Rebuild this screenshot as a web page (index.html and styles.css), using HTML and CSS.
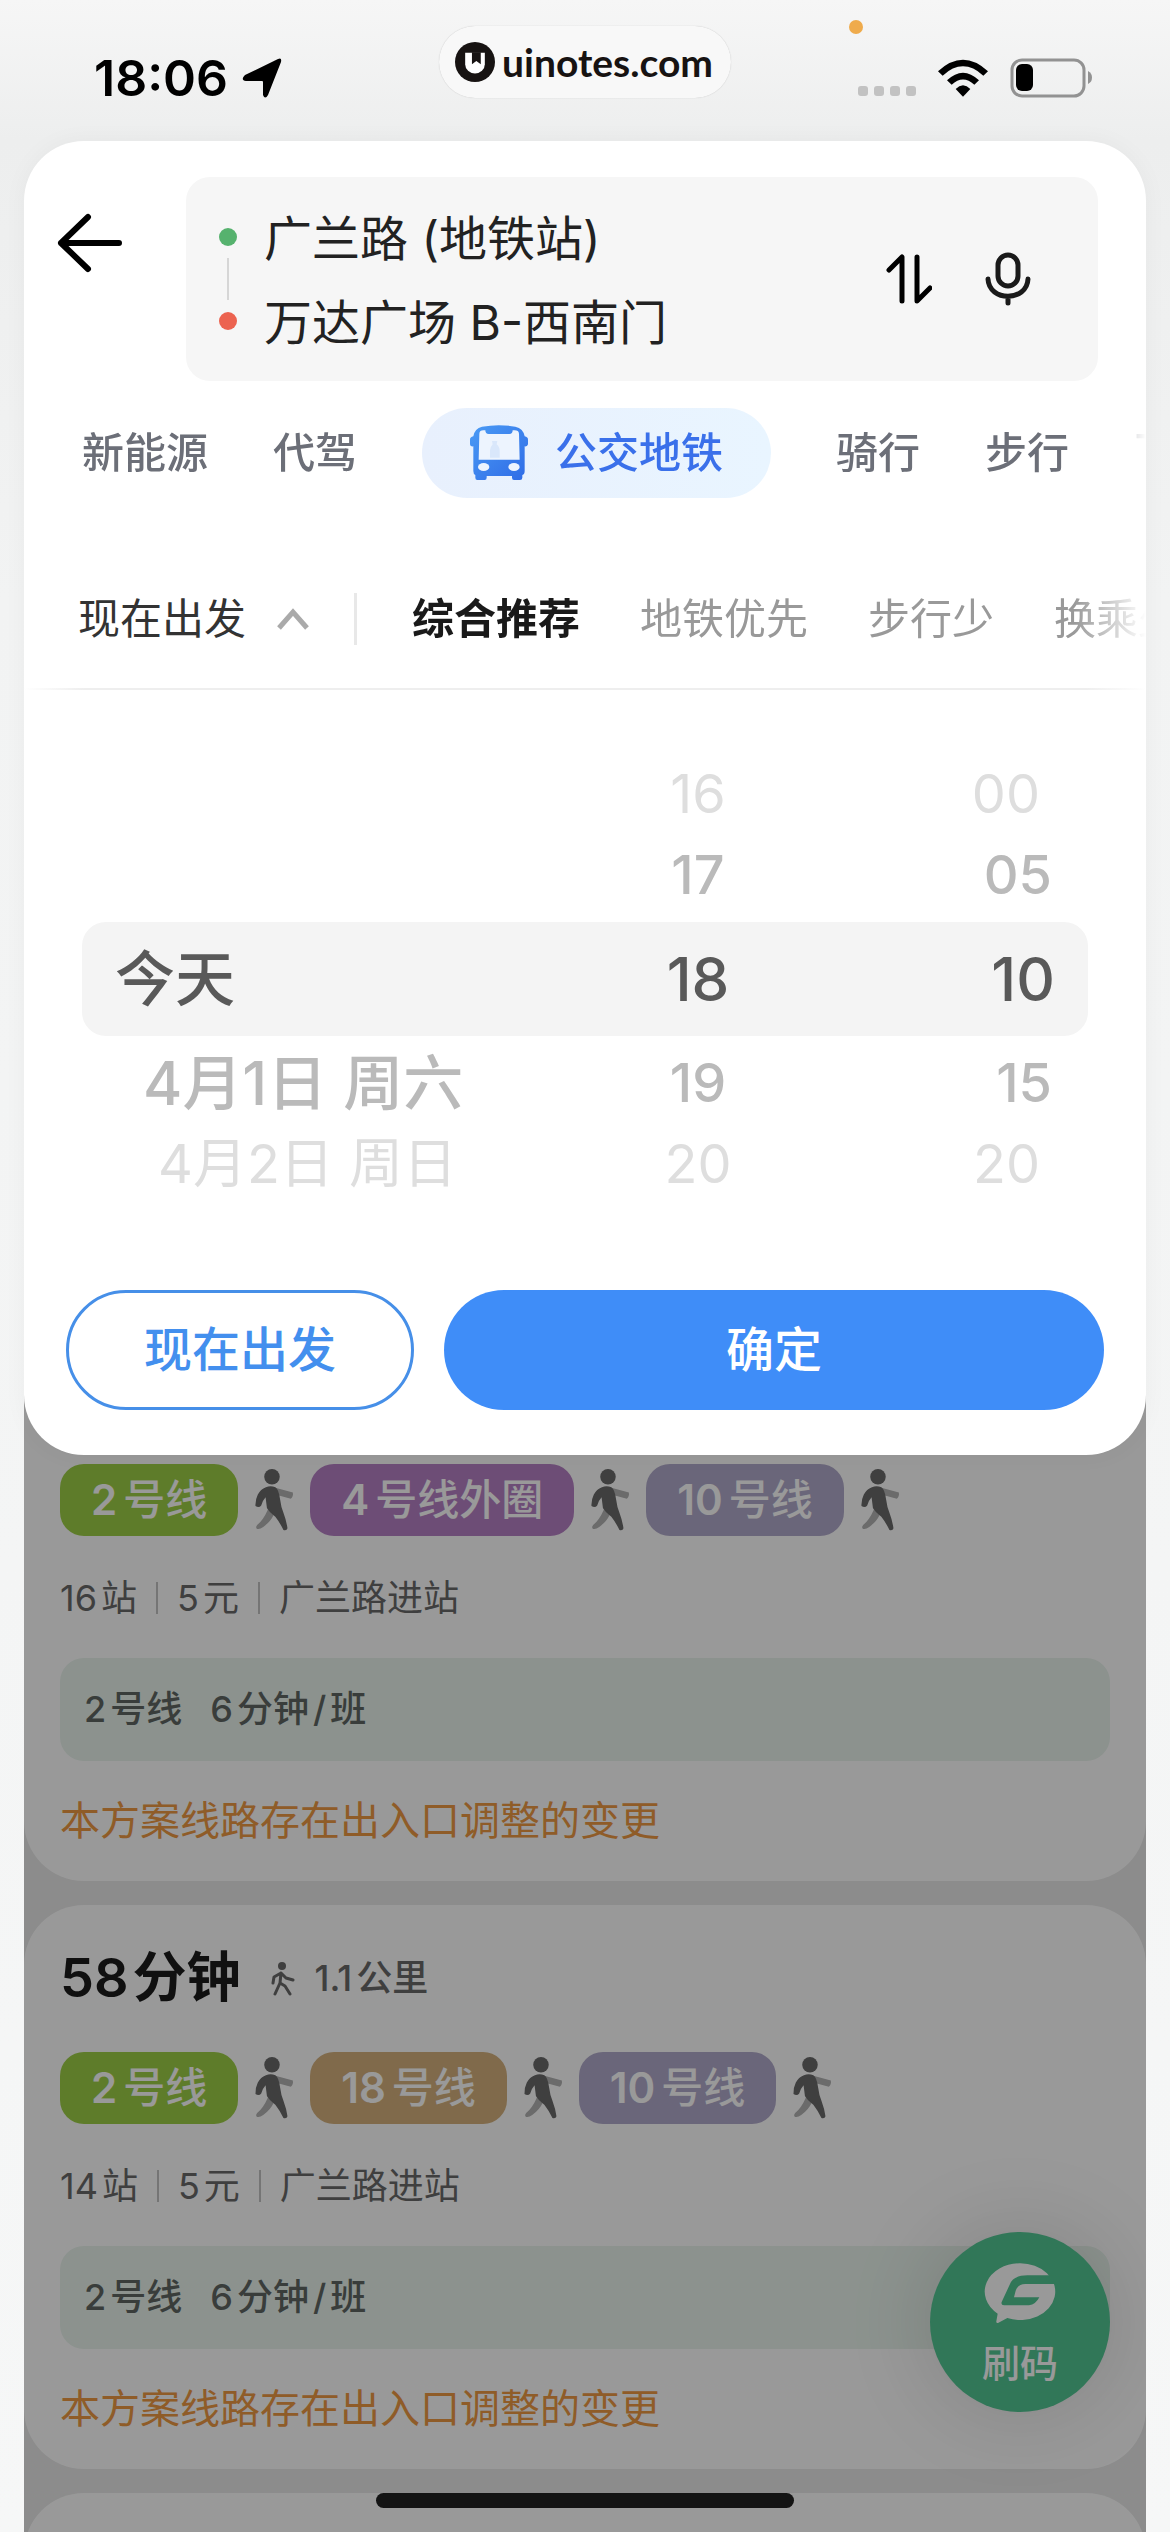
FILE: index.html
```html
<!DOCTYPE html>
<html lang="zh-CN">
<head>
<meta charset="utf-8">
<meta name="viewport" content="width=device-width, initial-scale=1">
<title>公交地铁</title>
<link rel="stylesheet" href="styles.css">
</head>
<body>
<svg class="symbols" aria-hidden="true">
  <symbol id="transfer" viewBox="40 55 120 190">
    <path d="M104 114L156 128Q158 140 150 146L112 136Z" fill="#b2b2b2"/>
    <path d="M82 178Q68 210 50 224Q44 232 50 236Q58 238 68 230Q90 214 100 192Z" fill="#b2b2b2"/>
    <circle cx="94" cy="81" r="23"/>
    <path d="M76 112Q90 107 104 112Q114 118 118 148Q121 172 128 188Q137 212 140 234Q138 242 128 239Q118 218 104 200Q84 184 79 174L75 142Q66 152 62 166Q56 174 45 168Q44 150 52 134Q60 118 76 112Z"/>
  </symbol>
</svg>

<header class="status">
  <div class="status-left">
    <span class="time">18:06</span>
    <svg width="40" height="40" viewBox="0 0 40 40"><path d="M36 1Q40 -1 39 4L26 37Q23 42 21 37V24Q21 23 20 23H4Q-2 22 3 17Z"/></svg>
  </div>
  <div class="brand">
    <svg width="40" height="40" viewBox="0 0 118 118"><circle cx="59" cy="59" r="59" fill="#171312"/><path d="M30 32H88V66A29 27 0 0 1 30 66Z" fill="#fff"/><path d="M50 30H76V66L63 56L50 66Z" fill="#171312"/></svg>
    <span>uinotes.com</span>
  </div>
  <div class="status-right">
    <span class="mic-dot"></span>
    <span class="signal"><i></i><i></i><i></i><i></i></span>
    <svg width="52" height="38" viewBox="0 0 156 114"><path d="M3 37Q78 -32 153 37L139 50Q78 -6 17 50Z"/><path d="M30 64Q78 18 126 64L112 77Q78 46 44 77Z"/><path d="M56 90Q78 68 100 90L78 113Z"/></svg>
    <svg width="84" height="40" viewBox="0 0 84 40"><rect x="2" y="2" width="72" height="36" rx="10" fill="none" stroke="#929292" stroke-width="3"/><rect x="6" y="6" width="17" height="27" rx="6"/><path d="M78 13Q82 15 82 19.500T78 26Z" fill="#929292"/></svg>
  </div>
</header>

<main class="page">
  <section class="sheet">
    <form class="search">
      <button type="button" class="icon-btn back" aria-label="返回">
        <svg width="66" height="60" viewBox="0 0 66 60"><path d="M31 4L4 30L31 56M4 30H62" fill="none" stroke="#000" stroke-width="6" stroke-linecap="round" stroke-linejoin="round"/></svg>
      </button>
      <div class="route">
        <div class="stops">
          <label class="stop"><span class="dot dot-start"></span><input type="text" value="广兰路 (地铁站)" aria-label="起点"></label>
          <label class="stop"><span class="dot dot-end"></span><input type="text" value="万达广场 B-西南门" aria-label="终点"></label>
        </div>
        <button type="button" class="icon-btn" aria-label="交换起终点">
          <svg width="46" height="52" viewBox="0 0 46 52"><path d="M3 17L16 4V48M31 4V48L44 35" fill="none" stroke="#000" stroke-width="5" stroke-linecap="round" stroke-linejoin="round"/></svg>
        </button>
        <button type="button" class="icon-btn" aria-label="语音">
          <svg width="46" height="56" viewBox="0 0 46 56"><g fill="none" stroke="#1a1a1a" stroke-width="5"><rect x="13" y="4" width="20" height="31" rx="10"/><path d="M3 28C4 51 42 51 43 28M23 46V52" stroke-linecap="round"/></g></svg>
        </button>
      </div>
    </form>

    <nav class="modes">
      <button type="button">新能源</button>
      <button type="button">代驾</button>
      <button type="button" class="mode-active">
        <svg width="58" height="56" viewBox="0 0 174 168">
          <defs><linearGradient id="bus" x1="0" y1="0" x2="1" y2="1"><stop offset="0" stop-color="#4a9bf5"/><stop offset="1" stop-color="#2f6be6"/></linearGradient></defs>
          <path d="M10 34Q14 10 36 5Q86 -4 136 5Q160 10 164 34Q174 36 174 44V58Q172 66 164 64V138Q164 148 157 150V158Q157 165 150 165H132Q126 165 126 158V153H50V158Q50 165 44 165H22Q16 165 16 158V150Q10 148 10 138V64Q0 66 0 58V44Q0 36 10 34Z" fill="url(#bus)"/>
          <path d="M28 26Q29 16 40 16H46Q46 27 56 27H118Q128 27 128 16H134Q146 16 147 26L149 104H26Z" fill="#edf4fe"/>
          <path d="M66 48H82L80 58Q90 66 89 80V98H60V76Q62 64 68 58Z" fill="#d9e7fb"/>
          <ellipse cx="41" cy="126" rx="17" ry="12" fill="#edf4fe"/><ellipse cx="132" cy="126" rx="17" ry="12" fill="#edf4fe"/>
        </svg>
        公交地铁
      </button>
      <button type="button">骑行</button>
      <button type="button">步行</button>
      <button type="button">飞机</button>
    </nav>

    <div class="filters">
      <button type="button" class="depart" aria-expanded="true">现在出发
        <svg width="32" height="22" viewBox="0 0 32 22"><path d="M2 20L16 4L30 20" fill="none" stroke="#aaa" stroke-width="5"/></svg>
      </button>
      <div class="sorts">
        <button type="button" class="sort-active">综合推荐</button>
        <button type="button">地铁优先</button>
        <button type="button">步行少</button>
        <button type="button">换乘少</button>
      </div>
    </div>

    <div class="picker">
      <ul class="wheel wheel-date">
        <li class="far"></li>
        <li class="near"></li>
        <li class="picked">今天</li>
        <li class="near">4月1日 周六</li>
        <li class="far">4月2日 周日</li>
      </ul>
      <ul class="wheel wheel-hour">
        <li class="far">16</li>
        <li class="near">17</li>
        <li class="picked">18</li>
        <li class="near">19</li>
        <li class="far">20</li>
      </ul>
      <ul class="wheel wheel-minute">
        <li class="far">00</li>
        <li class="near">05</li>
        <li class="picked">10</li>
        <li class="near">15</li>
        <li class="far">20</li>
      </ul>
    </div>

    <div class="actions">
      <button type="button" class="action-now">现在出发</button>
      <button type="button" class="action-ok">确定</button>
    </div>
  </section>

  <section class="results">
    <article class="card card-under">
      <div class="lines">
        <span class="line line-2"><b>2</b>号线</span>
        <svg class="walk"><use href="#transfer"/></svg>
        <span class="line line-4"><b>4</b>号线外圈</span>
        <svg class="walk"><use href="#transfer"/></svg>
        <span class="line line-10"><b>10</b>号线</span>
        <svg class="walk"><use href="#transfer"/></svg>
      </div>
      <div class="facts"><span><b>16</b>站</span><span><b>5</b>元</span><span>广兰路进站</span></div>
      <div class="interval"><span><b>2</b>号线</span><span><b>6</b>分钟<i>/</i>班</span></div>
      <p class="notice">本方案线路存在出入口调整的变更</p>
    </article>

    <article class="card">
      <div class="summary">
        <h2><b>58</b>分钟</h2>
        <svg width="24" height="34" viewBox="0 0 24 34"><circle cx="11" cy="4" r="4" fill="#696969"/><path d="M10 11L9 21L4 32M9 21L14 24L19 32M10 11L3 15L2 21M10 11L15 16L22 18" fill="none" stroke="#696969" stroke-width="3" stroke-linecap="round" stroke-linejoin="round"/></svg>
        <span><b>1.1</b>公里</span>
      </div>
      <div class="lines">
        <span class="line line-2"><b>2</b>号线</span>
        <svg class="walk"><use href="#transfer"/></svg>
        <span class="line line-18"><b>18</b>号线</span>
        <svg class="walk"><use href="#transfer"/></svg>
        <span class="line line-10"><b>10</b>号线</span>
        <svg class="walk"><use href="#transfer"/></svg>
      </div>
      <div class="facts"><span><b>14</b>站</span><span><b>5</b>元</span><span>广兰路进站</span></div>
      <div class="interval"><span><b>2</b>号线</span><span><b>6</b>分钟<i>/</i>班</span></div>
      <p class="notice">本方案线路存在出入口调整的变更</p>
    </article>

    <article class="card card-next"></article>

    <button type="button" class="scan">
      <svg width="72" height="62" viewBox="0 0 216 186"><path d="M107 4A105 85 0 1 1 70 168L42 183Q36 184 37 178L41 155A105 85 0 0 1 107 4Z" fill="#fff"/><path d="M215 40H130Q88 40 78 66L53 120Q50 130 60 130H135Q155 128 166 106H90L95 86Q102 66 124 66H215Z" fill="#53c693"/></svg>
      刷码
    </button>
  </section>
</main>
<div class="home-bar"></div>
</body>
</html>
```
FILE: styles.css
```css
* {
  box-sizing: border-box;
}

body {
  position: relative;
  display: flex;
  flex-direction: column;
  min-height: 100vh;
  margin: 0;
  background: linear-gradient(#f6f6f6 0, #edeeee 140px, #f2f3f3 600px, #f6f7f7 100%);
  color: #222;
  font-family: Inter, "Noto Sans CJK SC", sans-serif;
  line-height: 1.2;
}

button,
input {
  padding: 0;
  border: 0;
  background: none;
  color: inherit;
  font: inherit;
}

button {
  flex: none;
  white-space: nowrap;
}

svg {
  flex: none;
}

b,
i {
  font-weight: inherit;
  font-style: normal;
}

.symbols {
  position: absolute;
  width: 0;
  height: 0;
}

/* Status bar */

.status {
  display: grid;
  grid-template-columns: 1fr auto 1fr;
  height: 141px;
  padding: 0 76px 0 94px;
  color: #000;
}

.status-left,
.status-right {
  display: flex;
  align-items: center;
  height: 156px;
}

.status-left {
  gap: 14px;
}

.time {
  font-size: 50px;
  font-weight: 600;
}

.brand {
  display: flex;
  align-items: center;
  gap: 7px;
  height: 72px;
  margin: 26px 0 0 -18px;
  padding: 0 18px 0 16px;
  border-radius: 36px;
  background: #f8f8f8;
  box-shadow: 0 0 1px #bbb;
  color: #171312;
  font-family: Lato, sans-serif;
  font-size: 39px;
  font-weight: 700;
}

.status-right {
  position: relative;
  justify-content: flex-end;
  gap: 21px;
}

.mic-dot {
  position: absolute;
  top: 20px;
  right: 231px;
  width: 14px;
  height: 14px;
  border-radius: 50%;
  background: #efab4c;
}

.signal {
  display: flex;
  gap: 6px;
  padding-top: 26px;
}

.signal i {
  width: 10px;
  height: 10px;
  border-radius: 3px;
  background: #c2c2c2;
}

/* Trip sheet */

.page {
  display: flex;
  flex: 1;
  flex-direction: column;
  margin: 0 24px;
}

.sheet {
  position: relative;
  z-index: 1;
  padding: 36px 0 45px;
  border-radius: 60px;
  background: #fff;
  box-shadow: 0 0 24px rgba(0, 0, 0, 0.04);
}

.search {
  display: flex;
  gap: 60px;
  padding: 0 48px 0 30px;
}

.icon-btn {
  display: flex;
  align-items: center;
  justify-content: center;
  width: 72px;
}

.back {
  height: 132px;
}

.route {
  display: flex;
  flex: 1;
  gap: 27px;
  min-width: 0;
  padding: 18px 54px 18px 33px;
  border-radius: 24px;
  background: #f6f6f6;
}

.stops {
  position: relative;
  flex: 1;
  min-width: 0;
}

.stops::before {
  content: "";
  position: absolute;
  top: 63px;
  left: 8px;
  width: 2px;
  height: 42px;
  background: #d6d6d6;
}

.stop {
  display: flex;
  align-items: center;
  gap: 27px;
  height: 84px;
}

.stop input {
  flex: 1;
  width: 100%;
  min-width: 0;
  height: 72px;
  padding-bottom: 4px;
  font-size: 48px;
}

.dot {
  flex: none;
  width: 18px;
  height: 18px;
  border-radius: 50%;
}

.dot-start {
  background: #56b26e;
}

.dot-end {
  background: #ec6350;
}

.modes {
  display: flex;
  align-items: center;
  gap: 65px;
  height: 90px;
  margin-top: 27px;
  padding-left: 58px;
  overflow: hidden;
  color: #6c6f78;
  font-size: 42px;
  font-weight: 500;
  mask-image: linear-gradient(to left, transparent 0, #000 60px);
}

.mode-active {
  display: flex;
  align-items: center;
  gap: 27px;
  height: 90px;
  padding: 0 48px;
  border-radius: 45px;
  background: linear-gradient(90deg, #e8f0fd, #e9f5ff);
  color: #3a70ea;
}

.filters {
  display: flex;
  align-items: center;
  height: 142px;
  margin-top: 50px;
  padding-left: 54px;
  background: linear-gradient(90deg, #fff, #eee 60px, #eee calc(100% - 60px), #fff) bottom / 100% 2px no-repeat;
  font-size: 42px;
  line-height: 52px;
}

.depart {
  display: flex;
  align-items: center;
  gap: 31px;
  padding-right: 45px;
  border-right: 3px solid #e8e8e8;
  color: #333;
}

.sorts {
  display: flex;
  flex: 1;
  gap: 60px;
  min-width: 0;
  padding-left: 55px;
  overflow: hidden;
  color: #999;
  mask-image: linear-gradient(to left, transparent 0, #000 72px);
}

.sort-active {
  color: #1a1a1a;
  font-weight: 700;
}

/* Time picker */

.picker {
  display: grid;
  grid-template-columns: 478fr 276fr 252fr;
  margin: 70px 58px 92px;
}

.wheel {
  margin: 0;
  padding: 0;
  list-style: none;
}

.wheel li {
  display: flex;
  align-items: center;
  white-space: pre;
}

.wheel .far {
  height: 68px;
  color: #dedede;
  font-size: 54px;
}

.wheel .near {
  height: 94px;
  color: #bababa;
  font-size: 54px;
  font-weight: 500;
}

.wheel .picked {
  height: 114px;
  background: #f4f4f4;
  color: #595959;
  font-size: 60px;
  font-weight: 500;
}

.wheel-date .picked {
  padding-left: 33px;
  border-radius: 24px 0 0 24px;
}

.wheel-date .near {
  padding-left: 61px;
  font-size: 60px;
}

.wheel-date .far {
  padding-left: 76px;
}

.wheel-hour li {
  justify-content: center;
}

.wheel-minute li {
  justify-content: flex-end;
}

.wheel-minute .picked {
  padding-right: 33px;
  border-radius: 0 24px 24px 0;
}

.wheel-minute .near {
  padding-right: 36px;
}

.wheel-minute .far {
  padding-right: 48px;
}

.actions {
  display: flex;
  gap: 30px;
  padding: 0 42px;
  font-size: 48px;
  font-weight: 500;
}

.actions button {
  height: 120px;
  border-radius: 60px;
}

.action-now {
  width: 348px;
  border: 3px solid #468fe8;
  color: #438fee;
}

.actions .action-ok {
  flex: 1;
  background: #3f8df8;
  color: #fff;
}

/* Route results behind the sheet */

.results {
  position: relative;
  display: flex;
  flex: 1;
  flex-direction: column;
  gap: 24px;
  margin-top: -75px;
  overflow: hidden;
  background: #e9e9e9;
}

.results::after {
  content: "";
  position: absolute;
  inset: 0;
  background: rgba(0, 0, 0, 0.4);
}

.card {
  padding: 0 36px;
  border-radius: 60px;
  background: #fff;
}

.card-under {
  padding-top: 84px;
  border-radius: 0 0 60px 60px;
}

.card-next {
  flex: 1 0 60px;
  margin-bottom: -21px;
  border-radius: 60px 60px 0 0;
}

.summary {
  display: flex;
  align-items: center;
  gap: 20px;
  height: 147px;
  color: #696969;
  font-size: 36px;
  font-weight: 500;
}

.summary h2 {
  margin: 0 10px 0 0;
  color: #1c1c1c;
  font-size: 54px;
  font-weight: 600;
}

.card b {
  margin-right: 4px;
}

.lines {
  display: flex;
  align-items: center;
}

.line {
  height: 72px;
  padding: 0 31px;
  border-radius: 24px;
  color: #fff;
  font-size: 42px;
  font-weight: 500;
  line-height: 72px;
}

.lines b {
  margin-right: 6px;
  font-weight: 600;
}

.line-2 {
  background: #9dcf46;
}

.line-4 {
  background: #b680c5;
}

.line-10 {
  background: #b1aacb;
}

.line-18 {
  background: #d5b17d;
}

.walk {
  width: 72px;
  height: 64px;
  fill: #696969;
}

.facts {
  display: flex;
  align-items: center;
  height: 122px;
  padding-top: 2px;
  color: #696969;
  font-size: 36px;
  line-height: 32px;
}

.facts span + span {
  margin-left: 19px;
  padding-left: 19px;
  border-left: 2px solid #c4c4c4;
}

.interval {
  display: flex;
  align-items: center;
  gap: 28px;
  height: 103px;
  padding: 0 24px;
  border-radius: 24px;
  background: #e9f4ed;
  color: #606663;
  font-size: 36px;
  font-weight: 500;
}

.interval i {
  margin: 0 4px;
}

.notice {
  display: flex;
  align-items: center;
  height: 120px;
  margin: 0;
  color: #ee9943;
  font-size: 40px;
}

.scan {
  position: absolute;
  right: 36px;
  bottom: 120px;
  display: flex;
  flex-direction: column;
  align-items: center;
  justify-content: center;
  gap: 14px;
  width: 180px;
  height: 180px;
  padding-top: 6px;
  border-radius: 50%;
  background: #53c693;
  box-shadow: 0 0 90px rgba(0, 0, 0, 0.14);
  color: #fff;
  font-size: 38px;
  font-weight: 500;
  line-height: 50px;
}

.home-bar {
  position: absolute;
  right: 0;
  bottom: 24px;
  left: 0;
  z-index: 2;
  width: 418px;
  height: 15px;
  margin: 0 auto;
  border-radius: 8px;
  background: #141414;
}
```
